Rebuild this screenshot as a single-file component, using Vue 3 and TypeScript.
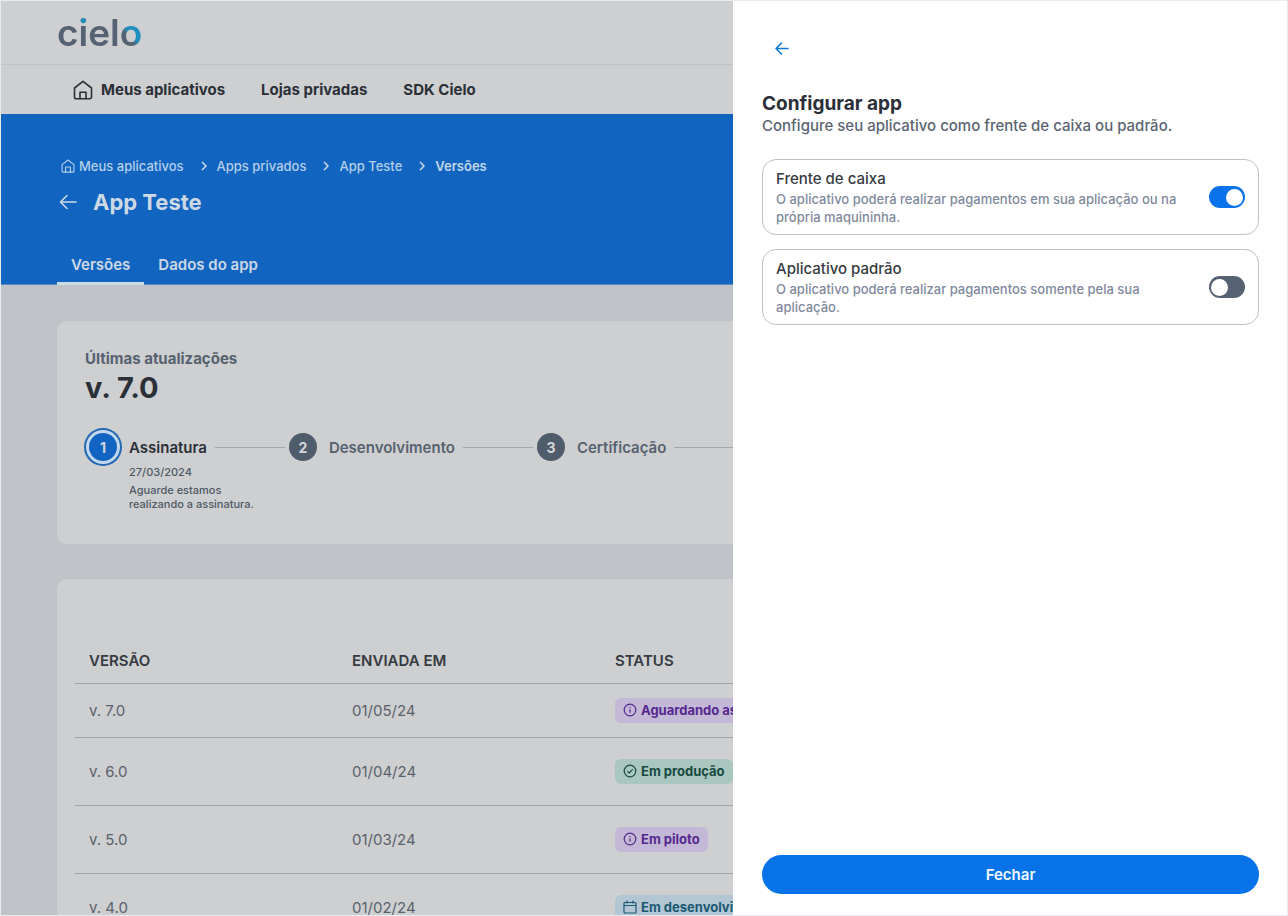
<script setup lang="ts">
import { ref } from 'vue'

type Tone = 'purple' | 'green' | 'cyan'

interface Version {
  name: string
  date: string
  status: string
  tone: Tone
}

const versions: Version[] = [
  { name: 'v. 7.0', date: '01/05/24', status: 'Aguardando assinatura', tone: 'purple' },
  { name: 'v. 6.0', date: '01/04/24', status: 'Em produção', tone: 'green' },
  { name: 'v. 5.0', date: '01/03/24', status: 'Em piloto', tone: 'purple' },
  { name: 'v. 4.0', date: '01/02/24', status: 'Em desenvolvimento', tone: 'cyan' },
]

const crumbs: string[] = ['Apps privados', 'App Teste']

const options = ref([
  {
    id: 'frente',
    title: 'Frente de caixa',
    text: 'O aplicativo poderá realizar pagamentos em sua aplicação ou na própria maquininha.',
    on: true,
  },
  {
    id: 'padrao',
    title: 'Aplicativo padrão',
    text: 'O aplicativo poderá realizar pagamentos somente pela sua aplicação.',
    on: false,
  },
])
</script>

<template>
  <div class="frame">
    <div class="page">
      <header class="brand"><span class="logo">cielo</span></header>
      <nav class="main-nav">
        <a href="#" class="with-icon">
          <svg width="20" height="20" viewBox="0 0 20 20" class="line-icon">
            <path d="M1.500 8 10 1.400 18.500 8v9a1.800 1.800 0 0 1-1.800 1.800H3.300A1.800 1.800 0 0 1 1.500 17Z" />
            <path d="M7 18.500v-6.300h6v6.300" />
          </svg>
          Meus aplicativos
        </a>
        <a href="#">Lojas privadas</a>
        <a href="#">SDK Cielo</a>
      </nav>

      <section class="hero">
        <nav class="crumbs">
          <a href="#" class="crumb-home">
            <svg width="14" height="14" viewBox="0 0 20 20" class="line-icon">
              <path d="M1.500 8 10 1.400 18.500 8v9a1.800 1.800 0 0 1-1.800 1.800H3.300A1.800 1.800 0 0 1 1.500 17Z" />
              <path d="M6.500 18.500v-7h7v7" />
            </svg>
            Meus aplicativos
          </a>
          <template v-for="c in crumbs" :key="c">
            <svg width="8" height="10" viewBox="0 0 8 10" class="chevron"><path d="m2 1 4 4-4 4" /></svg>
            <a href="#">{{ c }}</a>
          </template>
          <svg width="8" height="10" viewBox="0 0 8 10" class="chevron"><path d="m2 1 4 4-4 4" /></svg>
          <strong>Versões</strong>
        </nav>
        <div class="title-row">
          <button type="button" class="icon-button" aria-label="Voltar">
            <svg width="18" height="16" viewBox="0 0 18 16" class="line-icon"><path d="M17 8H1.500M8 1.500 1.500 8 8 14.500" /></svg>
          </button>
          <h1>App Teste</h1>
        </div>
        <div class="tabs">
          <a href="#" class="active">Versões</a>
          <a href="#">Dados do app</a>
        </div>
      </section>

      <main class="content">
        <section class="card updates">
          <p class="eyebrow">Últimas atualizações</p>
          <h2>v. 7.0</h2>
          <ol class="steps">
            <li>
              <span class="dot current">1</span>
              <span class="step-name dark">Assinatura</span>
              <span class="rule"></span>
            </li>
            <li>
              <span class="dot">2</span>
              <span class="step-name">Desenvolvimento</span>
              <span class="rule"></span>
            </li>
            <li>
              <span class="dot">3</span>
              <span class="step-name">Certificação</span>
              <span class="rule"></span>
            </li>
          </ol>
          <div class="note">
            <p>27/03/2024</p>
            <p>Aguarde estamos<br />realizando a assinatura.</p>
          </div>
        </section>

        <section class="card versions">
          <table>
            <thead>
              <tr>
                <th scope="col">VERSÃO</th>
                <th scope="col">ENVIADA EM</th>
                <th scope="col" class="status-col">STATUS</th>
              </tr>
            </thead>
            <tbody>
              <tr v-for="v in versions" :key="v.name">
                <td>{{ v.name }}</td>
                <td>{{ v.date }}</td>
                <td>
                  <span class="pill" :class="v.tone">
                    <svg width="14" height="14" viewBox="0 0 14 14" class="pill-icon">
                      <template v-if="v.tone === 'cyan'">
                        <rect x="1" y="2.500" width="12" height="10.500" rx="1" />
                        <path d="M1 5.500h12M4 .5v3M10 .5v3" />
                      </template>
                      <template v-else>
                        <circle cx="7" cy="7" r="5.800" />
                        <path v-if="v.tone === 'green'" d="m4.500 7.200 1.800 1.700 3.400-3.500" />
                        <path v-else d="M7 6.300v3.400M7 4v1" />
                      </template>
                    </svg>
                    {{ v.status }}
                  </span>
                </td>
              </tr>
            </tbody>
          </table>
        </section>
      </main>
    </div>

    <aside class="drawer">
      <button type="button" class="icon-button back" aria-label="Voltar">
        <svg width="14" height="13" viewBox="0 0 14 13" class="line-icon"><path d="M13 6.500H1M6.500 1 1 6.500 6.500 12" /></svg>
      </button>
      <h2>Configurar app</h2>
      <p class="lead">Configure seu aplicativo como frente de caixa ou padrão.</p>
      <div class="options">
        <label v-for="o in options" :key="o.id" class="option" :for="o.id">
          <span class="option-text">
            <span class="option-title">{{ o.title }}</span>
            <span class="option-desc">{{ o.text }}</span>
          </span>
          <input :id="o.id" v-model="o.on" type="checkbox" role="switch" class="switch" />
        </label>
      </div>
      <button type="button" class="close">Fechar</button>
    </aside>
  </div>
</template>

<style>
body {
  margin: 0;
}
</style>

<style scoped>
* {
  box-sizing: border-box;
}
.frame {
  position: relative;
  height: 100vh;
  overflow: hidden;
  border: 1px solid #e6ebee;
  background: #bfc3c8;
  font-family: Inter, "Open Sans", sans-serif;
  color: #2b2f37;
}
p,
h1,
h2,
ol {
  margin: 0;
  padding: 0;
}
a {
  color: inherit;
  text-decoration: none;
}
button {
  font: inherit;
  border: 0;
  padding: 0;
  cursor: pointer;
}
.line-icon {
  fill: none;
  stroke: currentColor;
  stroke-width: 1.6;
  stroke-linecap: round;
  stroke-linejoin: round;
}
.brand {
  height: 64px;
  padding: 9px 56px 0;
  background: #cdcfd1;
  border-bottom: 1px solid #bfc3c6;
}
.logo {
  display: inline-block;
  font-size: 37px;
  line-height: 46px;
  font-weight: 600;
  color: transparent;
  background-color: transparent;
  background-image:
    linear-gradient(#1f8fc0, #1f8fc0),
    linear-gradient(50deg, #566273 40%, #1f8fc0 55%),
    linear-gradient(#566273, #566273);
  background-repeat: no-repeat;
  background-size: 11px 15px, 23px 30px, calc(100% - 23px) 100%;
  background-position: 20px 0, right 10px, left top;
  background-clip: text;
  -webkit-background-clip: text;
}
.main-nav {
  display: flex;
  align-items: center;
  gap: 36px;
  height: 49px;
  padding: 0 72px;
  background: #cdcfd1;
  font-size: 15px;
  font-weight: 700;
}
.with-icon {
  display: flex;
  align-items: center;
  gap: 8px;
}
.hero {
  height: 171px;
  padding: 42px 56px 0;
  background: #1165c0;
  border-bottom: 1px solid #5b8ac0;
  color: #cdd9e5;
}
.crumbs {
  display: flex;
  align-items: center;
  height: 20px;
  padding-left: 4px;
  font-size: 13px;
  font-weight: 500;
  color: #b4cfea;
}
.crumb-home {
  display: flex;
  align-items: center;
  gap: 4px;
}
.chevron {
  margin: 0 9px 0 16px;
  fill: none;
  stroke: #cdd9e5;
  stroke-width: 1.5;
}
.crumbs strong {
  font-weight: 600;
  color: #c5d8ea;
}
.title-row {
  display: flex;
  align-items: center;
  gap: 16px;
  height: 32px;
  margin-top: 10px;
  padding-left: 2px;
}
.icon-button {
  display: flex;
  background: none;
  color: inherit;
}
h1 {
  font-size: 22px;
  line-height: 32px;
  font-weight: 700;
}
.tabs {
  display: flex;
  height: 39px;
  margin-top: 28px;
  font-size: 15px;
  font-weight: 600;
}
.tabs a {
  padding: 9px 14px 0;
  line-height: 20px;
}
.tabs .active {
  border-bottom: 3px solid #c8dce2;
}
.content {
  display: grid;
  gap: 35px;
  padding: 36px 56px;
}
.card {
  background: #cdcfd1;
  border-radius: 10px;
}
.updates {
  height: 223px;
  padding: 27px 0 0 28px;
}
.eyebrow {
  font-size: 15px;
  line-height: 22px;
  font-weight: 700;
  color: #566270;
}
.updates h2 {
  font-size: 29px;
  line-height: 36px;
  font-weight: 700;
}
.steps {
  display: flex;
  align-items: center;
  height: 38px;
  margin-top: 22px;
  list-style: none;
}
.steps li {
  display: flex;
  align-items: center;
}
.dot {
  display: grid;
  place-items: center;
  width: 28px;
  height: 28px;
  margin: 0 12px 0 4px;
  border-radius: 50%;
  background: #4f5c6b;
  color: #d3d6d9;
  font-size: 14px;
  font-weight: 700;
}
.dot.current {
  background: #1164c2;
  box-shadow: 0 0 0 3px #c3d8ea, 0 0 0 5px #2468b4;
}
.step-name {
  font-size: 15px;
  font-weight: 600;
  color: #566270;
}
.step-name.dark {
  color: #2b2f37;
}
.rule {
  width: 70px;
  height: 1px;
  margin-left: 8px;
  background: #a4a8ac;
}
.note {
  padding: 0 0 0 44px;
  margin-top: -1px;
  font-size: 11px;
  line-height: 14px;
  font-weight: 500;
  color: #4f5965;
}
.note p + p {
  margin-top: 4px;
}
.versions {
  padding: 58px 18px 20px;
}
table {
  width: 100%;
  table-layout: fixed;
  border-collapse: collapse;
  font-size: 15px;
  color: #59616c;
}
th,
td {
  height: 68px;
  padding: 0 14px;
  text-align: left;
  border-bottom: 1px solid #a2a6aa;
  white-space: nowrap;
}
th {
  width: 263px;
  height: 46px;
  padding-top: 2px;
  font-weight: 600;
  color: #363a41;
}
th.status-col {
  width: auto;
}
tbody tr:first-child td {
  height: 54px;
}
.pill {
  display: inline-flex;
  align-items: center;
  gap: 4px;
  height: 25px;
  padding: 0 8px;
  border-radius: 6px;
  font-size: 13px;
  font-weight: 700;
}
.pill-icon {
  fill: none;
  stroke: currentColor;
  stroke-width: 1.2;
}
.purple {
  background: #c3b9d6;
  color: #56288f;
}
.green {
  background: #a9c6bf;
  color: #174a42;
}
.cyan {
  background: #b3c6d3;
  color: #1b5872;
}
.drawer {
  position: absolute;
  inset: 0 0 0 auto;
  display: flex;
  flex-direction: column;
  width: calc(43% + 1px);
  padding: 41px 28px 21px 29px;
  background: #fff;
}
.back {
  align-self: flex-start;
  padding: 0 13px;
  color: #1378dc;
}
.drawer h2 {
  margin-top: 37px;
  font-size: 19px;
  line-height: 24px;
  font-weight: 700;
}
.lead {
  font-size: 15px;
  line-height: 20px;
  font-weight: 500;
  color: #5b6472;
}
.options {
  display: grid;
  gap: 14px;
  margin-top: 23px;
}
.option {
  display: flex;
  align-items: center;
  justify-content: space-between;
  gap: 16px;
  padding: 8px 13px;
  border: 1px solid #bfc2c6;
  border-radius: 14px;
  cursor: pointer;
}
.option-title,
.option-desc {
  display: block;
}
.option-title {
  font-size: 15px;
  line-height: 22px;
  font-weight: 500;
  color: #363a42;
}
.option-desc {
  font-size: 13px;
  line-height: 18px;
  font-weight: 500;
  color: #7f899c;
}
.switch {
  appearance: none;
  flex: none;
  display: flex;
  align-items: center;
  width: 36px;
  height: 22px;
  margin: 0;
  padding: 0 2px;
  border-radius: 11px;
  background: #566173;
  cursor: pointer;
}
.switch::before {
  content: "";
  width: 17px;
  height: 17px;
  border-radius: 50%;
  background: #fff;
}
.switch:checked {
  justify-content: flex-end;
  background: #0a73eb;
}
.close {
  height: 39px;
  margin-top: auto;
  border-radius: 20px;
  background: #0873e8;
  color: #f2f8ff;
  font-size: 15px;
  font-weight: 600;
}
</style>
